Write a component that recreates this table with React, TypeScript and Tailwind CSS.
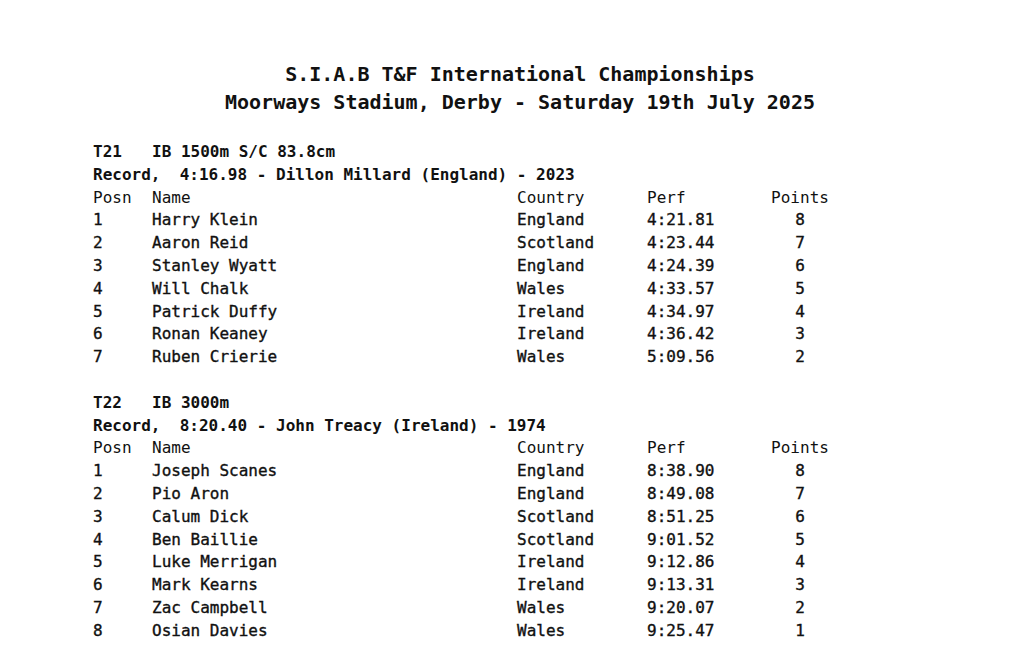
import React from 'react';

type Row = { posn: string; name: string; country: string; perf: string; points: string };

type Event = { code: string; title: string; record: string; rows: Row[] };

const events: Event[] = [
  {
    code: 'T21',
    title: 'IB 1500m S/C 83.8cm',
    record: 'Record,  4:16.98 - Dillon Millard (England) - 2023',
    rows: [
      { posn: '1', name: 'Harry Klein', country: 'England', perf: '4:21.81', points: '8' },
      { posn: '2', name: 'Aaron Reid', country: 'Scotland', perf: '4:23.44', points: '7' },
      { posn: '3', name: 'Stanley Wyatt', country: 'England', perf: '4:24.39', points: '6' },
      { posn: '4', name: 'Will Chalk', country: 'Wales', perf: '4:33.57', points: '5' },
      { posn: '5', name: 'Patrick Duffy', country: 'Ireland', perf: '4:34.97', points: '4' },
      { posn: '6', name: 'Ronan Keaney', country: 'Ireland', perf: '4:36.42', points: '3' },
      { posn: '7', name: 'Ruben Crierie', country: 'Wales', perf: '5:09.56', points: '2' },
    ],
  },
  {
    code: 'T22',
    title: 'IB 3000m',
    record: 'Record,  8:20.40 - John Treacy (Ireland) - 1974',
    rows: [
      { posn: '1', name: 'Joseph Scanes', country: 'England', perf: '8:38.90', points: '8' },
      { posn: '2', name: 'Pio Aron', country: 'England', perf: '8:49.08', points: '7' },
      { posn: '3', name: 'Calum Dick', country: 'Scotland', perf: '8:51.25', points: '6' },
      { posn: '4', name: 'Ben Baillie', country: 'Scotland', perf: '9:01.52', points: '5' },
      { posn: '5', name: 'Luke Merrigan', country: 'Ireland', perf: '9:12.86', points: '4' },
      { posn: '6', name: 'Mark Kearns', country: 'Ireland', perf: '9:13.31', points: '3' },
      { posn: '7', name: 'Zac Campbell', country: 'Wales', perf: '9:20.07', points: '2' },
      { posn: '8', name: 'Osian Davies', country: 'Wales', perf: '9:25.47', points: '1' },
    ],
  },
];

const ResultRow: React.FC<{ r: Row; head?: boolean }> = ({ r, head }) => (
  <div className={head ? 'flex h-[22.8px] items-center whitespace-pre' : 'flex h-[22.8px] items-center whitespace-pre [-webkit-text-stroke:0.35px_#111]'}>
    <span className="w-[59px]">{r.posn}</span>
    <span className="w-[365px]">{r.name}</span>
    <span className="w-[130px]">{r.country}</span>
    <span className="w-[124px]">{r.perf}</span>
    <span className="w-[58px] text-center">{r.points}</span>
  </div>
);

const App: React.FC = () => {
  return (
    <div className="w-[1024px] h-[658px] overflow-hidden bg-white text-[#111] font-['DejaVu_Sans_Mono','Liberation_Mono',monospace]">
      <div className="pt-[60px] pl-[16px] text-center text-[20px] font-bold leading-[28px]">
        <div>S.I.A.B T&amp;F International Championships</div>
        <div>Moorways Stadium, Derby - Saturday 19th July 2025</div>
      </div>

      <div className="mt-[24.6px] pl-[93px] text-[16px] flex flex-col gap-[22.8px]">
        {events.map(ev => (
          <div key={ev.code}>
            <div className="flex h-[22.8px] items-center font-bold whitespace-pre">
              <span className="w-[59px]">{ev.code}</span>
              <span>{ev.title}</span>
            </div>
            <div className="h-[22.8px] flex items-center font-bold whitespace-pre">{ev.record}</div>
            <ResultRow head r={{ posn: 'Posn', name: 'Name', country: 'Country', perf: 'Perf', points: 'Points' }} />
            {ev.rows.map(r => (
              <ResultRow key={r.posn} r={r} />
            ))}
          </div>
        ))}
      </div>
    </div>
  );
};

export default App;
